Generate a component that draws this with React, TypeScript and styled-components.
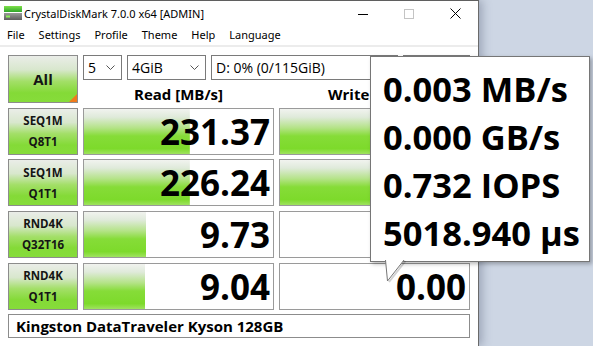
import React from "react";
import styled, { createGlobalStyle } from "styled-components";

const GlobalStyle = createGlobalStyle`
  html, body { margin: 0; padding: 0; }
  body {
    background: #cdd6e4;
    font-family: "Open Sans", "Noto Sans", sans-serif;
    overflow: hidden;
    color: #000;
  }
  * { box-sizing: border-box; }
`;

const barGradient =
  "linear-gradient(to bottom, #f1f3ef 0%, #dfeada 18%, #b4e387 42%, #86dc38 60%, #7dda2b 88%, #9fe35f 100%)";
const buttonGradient =
  "linear-gradient(to bottom, #eaede8 0%, #d8e7cd 30%, #a3df68 55%, #84da37 80%, #86dc3a 100%)";

const Desktop = styled.div`
  position: relative;
  width: 593px;
  height: 346px;
  background: #cdd6e4;
  overflow: hidden;
`;

const Window = styled.div`
  box-sizing: content-box;
  width: 478px;
  height: 345px;
  background: #fff;
  border-top: 1px solid #5f5f5f;
  border-right: 1px solid #6a6a6a;
  box-shadow: 3px 0 9px rgba(60, 70, 95, 0.35);
  display: flex;
  flex-direction: column;
`;

const TitleBar = styled.div`
  height: 25px;
  display: flex;
  align-items: center;
  font-family: "Noto Sans", "Open Sans", sans-serif;
  font-size: 11px;
  color: #000;
`;

const AppIcon = styled.div`
  width: 23px;
  display: flex;
  justify-content: center;
  padding-left: 2px;
`;

const TitleText = styled.div`
  flex: 1;
  padding-left: 1px;
  margin-top: -1px;
`;

const WinButton = styled.div`
  width: 46px;
  height: 25px;
  display: flex;
  align-items: center;
  justify-content: center;
`;

const MenuBar = styled.div`
  height: 19px;
  display: flex;
  align-items: center;
  font-family: "Noto Sans", "Open Sans", sans-serif;
  font-size: 11px;
  border-bottom: 2px solid #ececec;
  box-sizing: content-box;
`;

const MenuItem = styled.div`
  padding: 0 7px;
  margin-top: -2px;
`;

const Board = styled.div`
  display: grid;
  grid-template-columns: 70px 191px 191px;
  grid-template-rows: 48px repeat(4, 47px) 24px;
  column-gap: 5px;
  row-gap: 4.67px;
  padding: 8px 8px 0 8px;
`;

const TestButton = styled.div<{ $big?: boolean }>`
  position: relative;
  border: 1px solid #8c8c8c;
  background: ${buttonGradient};
  display: flex;
  flex-direction: column;
  align-items: center;
  justify-content: center;
  font-weight: 700;
  font-size: ${(p) => (p.$big ? "15px" : "11.5px")};
  line-height: ${(p) => (p.$big ? "20px" : "21px")};
  color: #151515;
`;

const Corner = styled.div`
  position: absolute;
  right: 0;
  bottom: 0;
  width: 0;
  height: 0;
  border-left: 8px solid transparent;
  border-bottom: 8px solid #f07a1c;
`;

const TopControls = styled.div`
  grid-column: 2 / 4;
  display: flex;
  flex-direction: column;
`;

const DropRow = styled.div`
  display: flex;
  gap: 5px;
  height: 25px;
`;

const Select = styled.div<{ $w: number }>`
  width: ${(p) => p.$w}px;
  height: 25px;
  border: 1px solid #7a7a7a;
  background: #fff;
  display: flex;
  align-items: center;
  justify-content: space-between;
  padding: 0 6px 0 4px;
  font-size: 14px;
  color: #000;
`;

const HeaderRow = styled.div`
  flex: 1;
  display: grid;
  grid-template-columns: 191px 191px;
  column-gap: 5px;
  align-items: end;
`;

const Header = styled.div`
  text-align: center;
  font-weight: 700;
  font-size: 15px;
  line-height: 15px;
  margin-bottom: 1px;
  white-space: nowrap;
`;

const ValueCell = styled.div<{ $fill: number }>`
  border: 1px solid #9a9a9a;
  background-color: #fff;
  background-image: ${barGradient};
  background-repeat: no-repeat;
  background-size: ${(p) => p.$fill}% 100%;
  display: flex;
  align-items: center;
  justify-content: flex-end;
  padding-right: 3px;
  font-weight: 700;
  font-size: 35px;
  line-height: 35px;
`;

const NameField = styled.div`
  grid-column: 1 / 4;
  border: 1px solid #8c8c8c;
  background: #fff;
  display: flex;
  align-items: center;
  padding-left: 7px;
  font-weight: 700;
  font-size: 15px;
`;

const Tooltip = styled.div`
  position: absolute;
  left: 370px;
  top: 56px;
  width: 220px;
  height: 206px;
  background: #fff;
  border: 1px solid #767676;
  box-shadow: 2px 2px 4px rgba(0, 0, 0, 0.28);
  padding: 8px 0 0 12px;
  font-weight: 700;
  font-size: 34.5px;
  line-height: 48px;
  white-space: nowrap;
`;

const TipArrow = styled.svg`
  position: absolute;
  left: 14px;
  top: 100%;
  margin-top: -1px;
  overflow: visible;
`;

const Chevron = () => (
  <svg width="9" height="5" viewBox="0 0 9 5">
    <polyline points="0.5,0.5 4.5,4.5 8.5,0.5" fill="none" stroke="#555" strokeWidth="1" />
  </svg>
);

const rows = [
  { a: "SEQ1M", b: "Q8T1", read: "231.37", rf: 56, wf: 55, write: "" },
  { a: "SEQ1M", b: "Q1T1", read: "226.24", rf: 56, wf: 55, write: "" },
  { a: "RND4K", b: "Q32T16", read: "9.73", rf: 33, wf: 0, write: "" },
  { a: "RND4K", b: "Q1T1", read: "9.04", rf: 32.5, wf: 0, write: "0.00" },
];

export default function App() {
  return (
    <>
      <GlobalStyle />
      <Desktop>
        <Window>
          <TitleBar>
            <AppIcon>
              <svg width="18" height="15" viewBox="0 0 18 15">
                <defs>
                  <linearGradient id="gtop" x1="0" y1="0" x2="0" y2="1">
                    <stop offset="0" stopColor="#7fe04a" />
                    <stop offset="1" stopColor="#2fa52a" />
                  </linearGradient>
                  <linearGradient id="gbot" x1="0" y1="0" x2="0" y2="1">
                    <stop offset="0" stopColor="#9a9a9a" />
                    <stop offset="1" stopColor="#5e5e5e" />
                  </linearGradient>
                </defs>
                <rect x="0" y="0" width="18" height="6" fill="url(#gtop)" />
                <rect x="0" y="7" width="18" height="7" fill="url(#gbot)" />
                <rect x="2" y="9.5" width="4" height="2" fill="#8cf05a" />
              </svg>
            </AppIcon>
            <TitleText>CrystalDiskMark 7.0.0 x64 [ADMIN]</TitleText>
            <WinButton>
              <svg width="10" height="10" viewBox="0 0 10 10">
                <line x1="0" y1="5.5" x2="10" y2="5.5" stroke="#000" strokeWidth="1" />
              </svg>
            </WinButton>
            <WinButton>
              <svg width="10" height="10" viewBox="0 0 10 10">
                <rect x="0.5" y="0.5" width="9" height="9" fill="none" stroke="#c4c4c4" strokeWidth="1" />
              </svg>
            </WinButton>
            <WinButton>
              <svg width="11" height="11" viewBox="0 0 11 11">
                <path d="M0.5 0.5 L10.5 10.5 M10.5 0.5 L0.5 10.5" stroke="#000" strokeWidth="1" />
              </svg>
            </WinButton>
          </TitleBar>
          <MenuBar>
            <MenuItem>File</MenuItem>
            <MenuItem>Settings</MenuItem>
            <MenuItem>Profile</MenuItem>
            <MenuItem>Theme</MenuItem>
            <MenuItem>Help</MenuItem>
            <MenuItem>Language</MenuItem>
          </MenuBar>
          <Board>
            <TestButton $big>
              All
              <Corner />
            </TestButton>
            <TopControls>
              <DropRow>
                <Select $w={39}>
                  <span>5</span>
                  <Chevron />
                </Select>
                <Select $w={79}>
                  <span>4GiB</span>
                  <Chevron />
                </Select>
                <Select $w={187}>
                  <span>D: 0% (0/115GiB)</span>
                  <Chevron />
                </Select>
                <Select $w={67}>
                  <span />
                  <Chevron />
                </Select>
              </DropRow>
              <HeaderRow>
                <Header>Read [MB/s]</Header>
                <Header>Write [MB/s]</Header>
              </HeaderRow>
            </TopControls>
            {rows.map((r, i) => (
              <React.Fragment key={i}>
                <TestButton>
                  <div>{r.a}</div>
                  <div>{r.b}</div>
                </TestButton>
                <ValueCell $fill={r.rf}>{r.read}</ValueCell>
                <ValueCell $fill={r.wf}>{r.write}</ValueCell>
              </React.Fragment>
            ))}
            <NameField>Kingston DataTraveler Kyson 128GB</NameField>
          </Board>
        </Window>
        <Tooltip>
          <div>0.003 MB/s</div>
          <div>0.000 GB/s</div>
          <div>0.732 IOPS</div>
          <div>5018.940 µs</div>
          <TipArrow width="20" height="22" viewBox="0 0 20 22">
            <polygon points="0.5,0 2.5,21 19,0" fill="#fff" />
            <line x1="0.5" y1="0" x2="2.5" y2="21" stroke="#767676" strokeWidth="1" />
            <line x1="19" y1="0" x2="2.5" y2="21" stroke="#767676" strokeWidth="1" />
            <line x1="20.5" y1="1" x2="4" y2="22" stroke="rgba(0,0,0,0.18)" strokeWidth="2" />
          </TipArrow>
        </Tooltip>
      </Desktop>
    </>
  );
}
